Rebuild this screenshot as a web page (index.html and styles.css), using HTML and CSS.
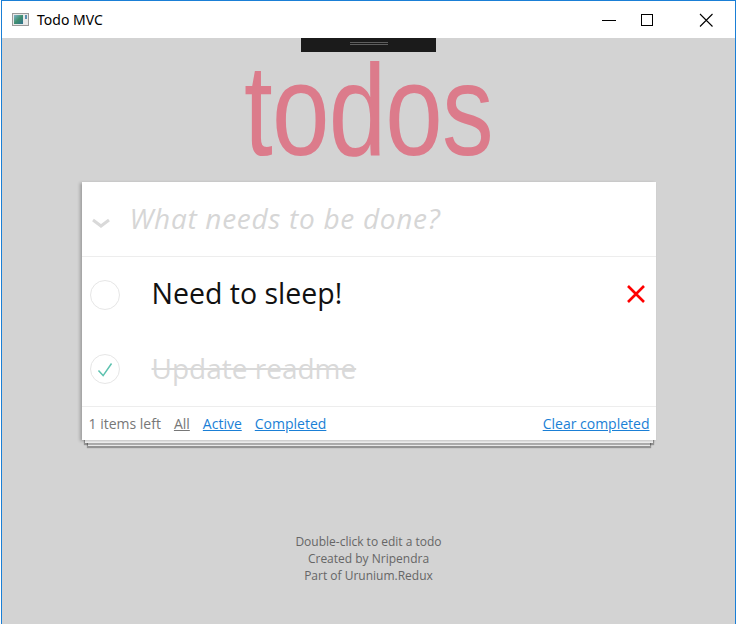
FILE: index.html
```html
<!DOCTYPE html>
<html>
<head>
<meta charset="utf-8">
<title>Todo MVC</title>
<link rel="stylesheet" href="styles.css">
</head>
<body>
<div class="window">
  <div class="titlebar">
    <svg class="app-icon" width="17" height="13" viewBox="0 0 17 13">
      <rect x="0.5" y="0.5" width="16" height="12" fill="#e8e8e8" stroke="#9a9a9a"/>
      <defs><linearGradient id="g" x1="0" y1="0" x2="1" y2="1"><stop offset="0" stop-color="#7fb2c9"/><stop offset="0.5" stop-color="#3f8f6f"/><stop offset="1" stop-color="#2f6f8f"/></linearGradient></defs>
      <rect x="2" y="2" width="9" height="9" fill="url(#g)"/>
      <rect x="13" y="2" width="2" height="4" fill="#5a8fb0"/>
    </svg>
    <span class="title">Todo MVC</span>
    <div class="controls">
      <svg class="ctl min" width="46" height="37" viewBox="0 0 46 37"><line x1="16" y1="19.5" x2="30" y2="19.5" stroke="#000" stroke-width="1"/></svg>
      <svg class="ctl max" width="46" height="37" viewBox="0 0 46 37"><rect x="17.5" y="13.5" width="11" height="11" fill="none" stroke="#000" stroke-width="1"/></svg>
      <svg class="ctl close" width="46" height="37" viewBox="0 0 46 37"><path d="M17 13 L29.5 25.5 M29.5 13 L17 25.5" stroke="#000" stroke-width="1.1" fill="none"/></svg>
    </div>
  </div>
  <div class="content">
    <div class="dragbar"><span class="grip"></span></div>
    <h1 class="logo"><span>todos</span></h1>
    <section class="card">
      <div class="new-row">
        <svg class="chevron" width="22" height="12" viewBox="0 0 22 12"><path d="M3 3 L11 9 L19 3" stroke="#d9d9d9" stroke-width="3" fill="none"/></svg>
        <span class="placeholder">What needs to be done?</span>
      </div>
      <ul class="list">
        <li class="item">
          <span class="toggle"></span>
          <span class="label">Need to sleep!</span>
          <svg class="destroy" width="20" height="20" viewBox="0 0 20 20"><path d="M2 2 L18 18 M18 2 L2 18" stroke="#ff0000" stroke-width="2.6" fill="none"/></svg>
        </li>
        <li class="item done">
          <span class="toggle"><svg width="30" height="30" viewBox="0 0 30 30"><path d="M8 15.5 L13 21 L22 8" stroke="#5dc2af" stroke-width="1.6" fill="none"/></svg></span>
          <span class="label">Update readme</span>
        </li>
      </ul>
      <div class="footer">
        <span class="count">1 items left</span>
        <a class="filter all">All</a>
        <a class="filter">Active</a>
        <a class="filter">Completed</a>
        <a class="filter clear">Clear completed</a>
      </div>
    </section>
    <footer class="info">
      <p>Double-click to edit a todo</p>
      <p>Created by Nripendra</p>
      <p>Part of Urunium.Redux</p>
    </footer>
  </div>
</div>
</body>
</html>
```
FILE: styles.css
```css
html, body {
  margin: 0;
  padding: 0;
  background: #ffffff;
  overflow: hidden;
}
.window {
  width: 733px;
  height: 623px;
  margin-left: 1px;
  border: 1px solid #1a7fd6;
  border-bottom: none;
  background: #d3d3d3;
  font-family: "Open Sans", "Noto Sans", sans-serif;
}
.titlebar {
  height: 37px;
  background: #ffffff;
  display: flex;
  align-items: center;
}
.app-icon {
  margin-left: 10px;
}
.title {
  margin-left: 8px;
  font-size: 14px;
  color: #000;
  font-family: "Noto Sans", "Open Sans", sans-serif;
}
.controls {
  margin-left: auto;
  display: flex;
  margin-right: 6px;
}
.ctl {
  display: block;
  width: 46px;
  height: 37px;
}
.ctl.max { margin-left: -8px; }
.ctl.close { margin-left: 13px; }
.content {
  display: flex;
  flex-direction: column;
  align-items: center;
}
.dragbar {
  width: 135px;
  height: 14px;
  background: #1b1b1b;
  display: flex;
  justify-content: center;
  padding-top: 4px;
  box-sizing: border-box;
}
.grip {
  width: 38px;
  height: 1px;
  border-top: 1px solid #5e5e5e;
  border-bottom: 1px solid #5e5e5e;
}
.logo {
  margin: 0;
  height: 130px;
  line-height: 116px;
  font-family: "Liberation Sans", Arial, sans-serif;
  font-weight: normal;
  font-size: 130px;
  color: #dc7b8b;
  text-align: center;
}
.logo span {
  display: inline-block;
  transform: scaleX(0.795);
  letter-spacing: -1px;
}
.card {
  width: 574px;
  background: #ffffff;
  box-shadow:
    -2px 1px 3px rgba(0,0,0,0.25),
    0 6px 0 -3px #f6f6f6,
    0 7px 1px -2px rgba(0,0,0,0.3),
    0 12px 0 -6px #f6f6f6,
    0 13px 1px -5px rgba(0,0,0,0.3);
}
.new-row {
  height: 74px;
  display: flex;
  align-items: center;
  border-bottom: 1px solid #ededed;
}
.chevron {
  margin-left: 8px;
  margin-top: 8px;
}
.placeholder {
  margin-left: 18px;
  font-size: 28px;
  font-style: italic;
  color: #d6d6d6;
  font-family: "Open Sans", "Noto Sans", sans-serif;
  letter-spacing: 0.7px;
  margin-top: -2px;
}
.list {
  list-style: none;
  margin: 0;
  padding: 0;
  border-bottom: 1px solid #ededed;
}
.item {
  display: flex;
  align-items: center;
  height: 74px;
}
.item:first-child { height: 75px; }
.toggle {
  width: 30px;
  height: 30px;
  border: 1.5px solid #e6e6e6;
  border-radius: 50%;
  margin-left: 8px;
  box-sizing: border-box;
  display: flex;
  align-items: center;
  justify-content: center;
}
.toggle svg { display: block; margin-top: 1px; }
.label {
  margin-left: 32px;
  font-size: 28.5px;
  color: #111;
  font-family: "Open Sans", "Noto Sans", sans-serif;
  margin-top: -3px;
}
.done .label {
  color: #d9d9d9;
  font-size: 28px;
  text-decoration: line-through;
  text-decoration-thickness: 2px;
}
.destroy {
  margin-left: auto;
  margin-right: 10px;
  margin-top: -1px;
}
.footer {
  height: 33px;
  display: flex;
  align-items: center;
  padding: 0 6px 0 7px;
  font-size: 14px;
  font-family: "Open Sans", "Noto Sans", sans-serif;
}
.count { color: #777; margin-right: 13px; }
.filter {
  color: #1a7fd6;
  text-decoration: underline;
  margin-right: 13px;
}
.filter.all { color: #777; }
.filter.clear { margin-left: auto; margin-right: 0; }
.info {
  margin-top: 93px;
  text-align: center;
  font-size: 12px;
  line-height: 17px;
  color: #666;
  font-family: "Open Sans", "Noto Sans", sans-serif;
}
.info p { margin: 0; }
```
